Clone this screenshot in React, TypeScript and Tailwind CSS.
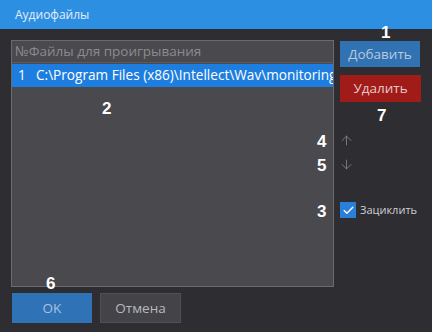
import { Check, ArrowUp, ArrowDown } from "lucide-react";

function Mark({ n, className }: { n: string; className: string }) {
  return (
    <span
      className={`absolute text-[17px] font-bold text-white leading-none ${className}`}
      style={{ fontFamily: "'Liberation Sans', Arial, sans-serif" }}
    >
      {n}
    </span>
  );
}

export default function App() {
  return (
    <div
      className="relative w-[432px] h-[332px] bg-[#2e2d32] overflow-hidden"
      style={{ fontFamily: "'Open Sans', 'Noto Sans', sans-serif" }}
    >
      <header className="h-[29px] bg-[#2d8fe2] flex items-center pl-[15px]">
        <span className="text-[12px] text-[#e4ecf6]">Аудиофайлы</span>
      </header>

      <div className="flex pl-[11px] pt-[11px]">
        <div className="flex flex-col">
          <div className="w-[323px] h-[247px] bg-[#4a494e] border border-[#6b6a6f] overflow-hidden">
            <div className="h-[22px] flex items-center pl-[3px] border-b border-[#5c5b60] text-[13.5px] text-[#8c8b90] whitespace-nowrap">
              №Файлы для проигрывания
            </div>
            <div className="h-[23px] mt-[1px] bg-[#1e7ee0] flex items-center pl-[6px] text-[13.6px] text-white whitespace-nowrap overflow-hidden">
              <span className="w-[18px] shrink-0">1</span>
              <span className="shrink-0">C:\Program Files (x86)\Intellect\Wav\monitoring.wav</span>
            </div>
          </div>
          <div className="flex gap-[8px] mt-[6px] ml-[1px]">
            <button className="w-[80px] h-[30px] bg-[#2f73b6] text-[13.5px] text-[#a9c2de]">
              OK
            </button>
            <button className="w-[81px] h-[30px] bg-[#444348] border border-[#505055] text-[13.5px] text-[#b8b8bc]">
              Отмена
            </button>
          </div>
        </div>

        <div className="flex flex-col ml-[6px] pt-[1px]">
          <button className="w-[80px] h-[26px] bg-[#3172b3] text-[13.5px] text-[#b9c9db]">
            Добавить
          </button>
          <button className="w-[81px] h-[27px] mt-[8px] bg-[#a11b18] text-[13.5px] text-[#e6c9c8]">
            Удалить
          </button>
          <div className="ml-[-1px] mt-[31px]">
            <ArrowUp size={15} strokeWidth={1.3} color="#8a898e" />
          </div>
          <div className="ml-[-1px] mt-[9px]">
            <ArrowDown size={15} strokeWidth={1.3} color="#8a898e" />
          </div>
          <div className="flex items-center mt-[30px]">
            <div className="w-[16px] h-[16px] bg-[#2a7fd8] flex items-center justify-center">
              <Check size={13} strokeWidth={2.5} color="#ffffff" />
            </div>
            <span className="ml-[4px] text-[11px] text-[#d0d0d4]">Зациклить</span>
          </div>
        </div>
      </div>

      <Mark n="1" className="left-[381px] top-[24px]" />
      <Mark n="2" className="left-[102px] top-[100px]" />
      <Mark n="7" className="left-[377px] top-[107px]" />
      <Mark n="4" className="left-[317px] top-[133px]" />
      <Mark n="5" className="left-[317px] top-[157px]" />
      <Mark n="3" className="left-[317px] top-[203px]" />
      <Mark n="6" className="left-[46px] top-[275px]" />
    </div>
  );
}
